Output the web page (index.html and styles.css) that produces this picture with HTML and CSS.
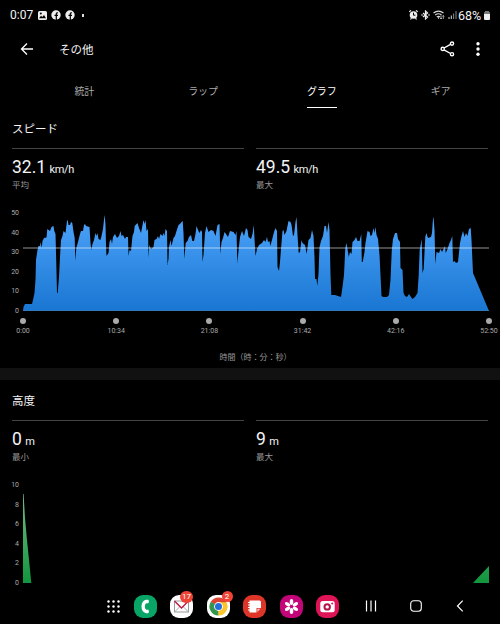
FILE: index.html
```html
<!DOCTYPE html>
<html lang="ja">
<head>
    <meta charset="UTF-8">
    <meta name="viewport" content="width=device-width, initial-scale=1.0">
    <title>その他</title>
    <link rel="stylesheet" href="styles.css">
</head>
<body>
    <div class="screen">
        <!-- Status bar -->
        <div class="status-bar">
            <div class="status-left">
                <span class="clock">0:07</span>
                <svg width="9" height="9" viewBox="0 0 9 9"><rect width="9" height="9" rx="1.5" fill="#eee"/><path d="M1 7.3L3 4.8L4.3 6L6 4L8 7.3Z" fill="#000"/><circle cx="2.8" cy="2.6" r="1" fill="#000"/></svg>
                <svg width="10" height="10" viewBox="0 0 10 10"><circle cx="5" cy="5" r="4.7" fill="#eee"/><path d="M5.3 10V4Q5.3 2.6 7 2.8M3.5 5.3H7" fill="none" stroke="#000" stroke-width="1.2"/></svg>
                <svg width="10" height="10" viewBox="0 0 10 10"><circle cx="5" cy="5" r="4.7" fill="#eee"/><path d="M5.3 10V4Q5.3 2.6 7 2.8M3.5 5.3H7" fill="none" stroke="#000" stroke-width="1.2"/></svg>
                <span class="more-dot"></span>
            </div>
            <div class="status-right">
                <svg width="9" height="10" viewBox="0 0 9 10"><path d="M.3 1.8L2 .4M8.7 1.8L7 .4M1.5 9.5L2.5 8M7.5 9.5L6.5 8" stroke="#eee" stroke-width="1.2"/><circle cx="4.5" cy="5" r="3.8" fill="#eee"/><path d="M4.5 2.7V5.2H6.4" fill="none" stroke="#000"/></svg>
                <svg width="9" height="10" viewBox="0 0 9 10"><path d="M2 3L6.6 7L4.5 9V1L6.6 3L2 7" fill="none" stroke="#eee" stroke-width="1.2"/><circle cx="1" cy="5" r=".8" fill="#eee"/><circle cx="8" cy="5" r=".8" fill="#eee"/></svg>
                <svg width="12" height="10" viewBox="0 0 12 10"><path d="M.5 3Q5.5-.8 10.5 3M2.2 5Q5.5 2.5 8.5 5M3.8 7Q5.5 5.8 7 7" fill="none" stroke="#ddd" stroke-width="1.1"/><path d="M5.5 9V7M8 5.5V9M7 8L8 9L9 8M10.3 9V5.5M9.5 6.5L10.3 5.5L11.2 6.5" fill="none" stroke="#ccc" stroke-width=".8"/></svg>
                <svg width="9" height="10" viewBox="0 0 9 10"><path d="M1 7V9M3.3 5.5V9" stroke="#ddd"/><path d="M5.6 3.5V9M8 1V9" stroke="#888"/></svg>
                <span class="battery-text">68%</span>
                <svg width="6" height="9" viewBox="0 0 6 9"><path d="M0 1.5Q0 1 1 1V0H5V1Q6 1 6 1.5V3H0Z" fill="#777"/><path d="M0 3H6V8Q6 9 5 9H1Q0 9 0 8Z" fill="#eee"/></svg>
            </div>
        </div>

        <!-- App bar -->
        <div class="app-bar">
            <svg class="back" width="14" height="14" viewBox="0 0 14 14"><path d="M13 7H2M7 1.5L1.5 7L7 12.5" fill="none" stroke="#fff" stroke-width="1.3"/></svg>
            <h1>その他</h1>
            <svg class="share" width="15" height="16" viewBox="0 0 15 16"><g fill="none" stroke="#fff" stroke-width="1.4"><path d="M4 7L10.5 3.3M4 8.8L10.5 12.5"/><circle cx="2.7" cy="7.9" r="1.6"/><circle cx="12" cy="2.6" r="1.6"/><circle cx="12" cy="13.2" r="1.6"/></g></svg>
            <svg width="4" height="16" viewBox="0 0 4 16"><g fill="#fff"><circle cx="2" cy="2.8" r="1.7"/><circle cx="2" cy="8" r="1.7"/><circle cx="2" cy="13.2" r="1.7"/></g></svg>
        </div>

        <div class="tabs">
            <div class="tab">統計</div>
            <div class="tab">ラップ</div>
            <div class="tab active">グラフ</div>
            <div class="tab">ギア</div>
        </div>

        <!-- Speed -->
        <div class="section speed">
            <h2>スピード</h2>
            <div class="stats">
                <div class="stat">
                    <div class="value">32.1 <span class="unit">km/h</span></div>
                    <div class="label">平均</div>
                </div>
                <div class="stat">
                    <div class="value">49.5 <span class="unit">km/h</span></div>
                    <div class="label">最大</div>
                </div>
            </div>
            <div class="chart">
                <div class="y-axis">
                    <span>50</span><span>40</span><span>30</span><span>20</span><span>10</span><span>0</span>
                </div>
                <svg class="plot" width="466" height="100" viewBox="23 211 466 100">
                    <defs>
                        <linearGradient id="blue" x1="0" y1="0" x2="0" y2="1">
                            <stop offset="0" stop-color="#4da3fa"/>
                            <stop offset="1" stop-color="#1976d2"/>
                        </linearGradient>
                    </defs>
                    <path fill="url(#blue)" d="M23 311L23.5 307L25 304H32L33 300L34.5 293L35.5 280L36 260L37.5 250L38.5 246H40L40.7 242L41.7 248L42.5 241L44 238L46.5 237.5L47.3 229L50 231L51.5 227L53.5 226L54.3 231L55.5 234L56.2 260L57 293H57.7L59 277L60 257L61 240L62.5 236L63.5 231L65.5 233L67 221L67.7 220L68.5 225L70 225L71 222L72.3 223L73.5 232L74.7 238L75.3 261L76.3 248L78 242L80 234L81 231L83 231L84 225L85 224L86 226L89.5 227L90.5 243L91.3 250L92.5 244L94 240L95.5 233L96.5 236L97.5 233L98.5 239L100.5 240L101.5 236L103 229L104 220L104.7 215L105.5 225L106 245L106.5 256L108.5 253L109.5 242L111 239L112 244L113 237L115 234L117 238L119 236L120.5 231L121.5 236L123 235L125 239L126 237L128 237L128.5 256L129.5 250L131 251L132.5 236L134 232L134.7 226L137.5 223L139 228L141 233L143.5 220L144.5 224L145.5 220L146.5 231L148 229L148.5 258L149.3 245L151 249L153.5 247L154.5 240L156.5 239L158 236L159 239L160.5 234L162.5 236L163.5 233L164.5 236L165.5 229L167 231L167.5 265L168.5 259L169 247L170.5 240L171.5 246L173.5 238L175 236L176.5 231L178.5 225L180 224L181.5 222L182.7 221L183.5 233L184.3 259L185.7 243L187.5 241L189 237L191 235L192.3 241L194 241L195.5 234L196.5 226L198 230L199.5 233L201 230L202 232L202.5 262L203.5 255L205 233L206.5 226L208.5 232L211 230L213.5 231L215.5 236L217.5 225L219.5 224L220.3 254L221.5 242L223 238L224.5 232L226 234L228 237L230 231L233.5 232L235.5 235L236.5 231L237.3 263L238.7 249L240 237L242 231L244 236L246 228L247.5 230L248.5 237L251 239L252.5 234L253.8 225L254.5 239L255.5 256L257 249L259 245L262 243L264 240L265.5 242L267 237L268 242L269.5 241L270.3 246L272 240L274 232L275.5 228L277 231L277.5 267L279 271L280 262L281.5 243L282.5 231L283.5 230L284.5 235L286.5 231L288.5 221L290.5 222L291.5 225L293 236L294 235L295.5 222L296.5 217L297.5 235L298.7 253L300 252L301.5 240L302.5 243L305 245L306.7 254L308.5 240L310.5 238L312 230L313.5 236L314.5 257L315 279L316.5 279L317.3 286L318.5 274L319.5 247L321 241L323 236L324.5 226L326 226L327 233L328.5 222L329.5 230L330.5 275L331.3 295H335L341 297L342.5 287L344 275L345.3 248L346.5 243L348 252L348.8 257L350 252L351.5 254L352.5 242L354.5 240L356 237L357.5 241L359.5 241L361.3 234L361.8 262H362.7L364.5 252L365.5 243L367.5 231L369.5 232L370.5 236L372 235L373.5 228L374.5 233L375.5 227L376.5 235L378 239L379.5 255L381.5 296L383 297H387L389 295L390.5 280L391.8 250L393 239L395 233H397L398 239L400 242L400.5 268L402.5 270L403.5 293L405 296L407 297L409 294L411 297L412.5 299L415 297L417.5 293L418.7 275L419.7 250L421.7 239L422.5 273L423.7 269L425.3 237L426.3 233L428 238L431 237L432 233L433 219L433.5 217L434.5 230L435.3 264L436.5 252L439 253L440.5 249L442 252L443 250L445 246L445.7 253L447.5 249L449.5 243L451 240L452.3 236L453 262L454.5 261L456 263L458 262L460 243L461.5 236L463 231L464.5 237L466 233L467.5 236L469 229L470.7 228L471.5 240L473 273L489 311Z"/>
                    <path d="M23 248H489" stroke="#fff" stroke-opacity=".29" stroke-width="2"/>
                    <path d="M23 310.5H489" stroke="#3d79b4" stroke-opacity=".7"/>
                </svg>
            </div>
            <div class="x-axis">
                <span>0:00</span><span>10:34</span><span>21:08</span><span>31:42</span><span>42:16</span><span>52:50</span>
            </div>
            <div class="x-title">時間（時：分：秒）</div>
        </div>

        <!-- Elevation -->
        <div class="section elevation">
            <h2>高度</h2>
            <div class="stats">
                <div class="stat">
                    <div class="value">0 <span class="unit">m</span></div>
                    <div class="label">最小</div>
                </div>
                <div class="stat">
                    <div class="value">9 <span class="unit">m</span></div>
                    <div class="label">最大</div>
                </div>
            </div>
            <div class="chart">
                <div class="y-axis">
                    <span>10</span><span>8</span><span>6</span><span>4</span><span>2</span><span>0</span>
                </div>
                <svg class="plot" width="466" height="100" viewBox="23 483 466 100">
                    <defs>
                        <linearGradient id="green" gradientUnits="userSpaceOnUse" x1="0" y1="494" x2="0" y2="583">
                            <stop offset="0" stop-color="#78b886"/>
                            <stop offset=".5" stop-color="#41a95f"/>
                            <stop offset="1" stop-color="#11963d"/>
                        </linearGradient>
                    </defs>
                    <path d="M23 583V494H23.6L25 518L27 540L29 560L31.3 583ZM473 583L489 566V583Z" fill="url(#green)"/>
                </svg>
            </div>
        </div>

        <!-- Taskbar -->
        <div class="taskbar">
            <svg class="apps" width="13" height="13" viewBox="0 0 13 13"><g fill="#fff"><circle cx="1.5" cy="1.5" r="1.2"/><circle cx="6.5" cy="1.5" r="1.2"/><circle cx="11.5" cy="1.5" r="1.2"/><circle cx="1.5" cy="6.5" r="1.2"/><circle cx="6.5" cy="6.5" r="1.2"/><circle cx="11.5" cy="6.5" r="1.2"/><circle cx="1.5" cy="11.5" r="1.2"/><circle cx="6.5" cy="11.5" r="1.2"/><circle cx="11.5" cy="11.5" r="1.2"/></g></svg>
            <div class="dock">
                <div class="app phone">
                    <svg width="23" height="23" viewBox="0 0 23 23"><path d="M12 4.8H13.8Q14.8 4.8 14.8 5.8V7.3Q14.8 8.3 13.8 8.3H12.3Q10.8 9.3 10.8 11.5T12.3 14.7H13.8Q14.8 14.7 14.8 15.7V17.2Q14.8 18.2 13.8 18.2H12Q7.5 17 7.5 11.5T12 4.8Z" fill="#fff"/></svg>
                </div>
                <div class="app mail">
                    <svg width="23" height="23" viewBox="0 0 23 23"><rect x="4.5" y="6" width="14" height="11" fill="#fff" stroke="#999"/><path d="M4.5 17L10 11.5M18.5 17L13 11.5" stroke="#aaa"/><path d="M4.5 6L11.5 13L18.5 6" fill="none" stroke="#bd1942" stroke-width="1.4"/></svg>
                    <span class="badge">17</span>
                </div>
                <div class="app chrome">
                    <svg width="23" height="23" viewBox="0 0 23 23"><path d="M11.5 11.5L3.7 7A9 9 0 0 1 19.3 7Z" fill="#df4333"/><path d="M11.5 11.5L19.3 7A9 9 0 0 1 11.5 20.5Z" fill="#fbc52c"/><path d="M11.5 11.5L11.5 20.5A9 9 0 0 1 3.7 7Z" fill="#34964d"/><path d="M11.5 7H19.3L15.4 13.7L11.5 20.5L11.5 12Z" fill="#fbc52c"/><path d="M3.7 7L7.6 13.7L11.5 11Z" fill="#34964d"/><path d="M11.5 7.2H19.3L17 4.5H11Z" fill="#df4333"/><circle cx="11.5" cy="11.5" r="4.4" fill="#fff"/><circle cx="11.5" cy="11.5" r="3.5" fill="#246fdc"/></svg>
                    <span class="badge small">2</span>
                </div>
                <div class="app notes">
                    <svg width="23" height="23" viewBox="0 0 23 23"><path d="M6.5 5.5H16.5Q18 5.5 18 7V13H13.5V17.5H6.5Z" fill="#fff"/><path d="M14.3 17V13.8H17.5Z" fill="#f7c9c4"/><path d="M5 7.5H7.5M5 10H7.5M5 12.5H7.5M5 15H7.5" stroke="#fff"/></svg>
                </div>
                <div class="app gallery">
                    <svg width="23" height="23" viewBox="0 0 23 23"><g fill="#fff"><ellipse cx="11.5" cy="7" rx="1.8" ry="3"/><ellipse cx="11.5" cy="16" rx="1.8" ry="3"/><ellipse cx="11.5" cy="7" rx="1.8" ry="3" transform="rotate(60 11.5 11.5)"/><ellipse cx="11.5" cy="16" rx="1.8" ry="3" transform="rotate(60 11.5 11.5)"/><ellipse cx="11.5" cy="7" rx="1.8" ry="3" transform="rotate(120 11.5 11.5)"/><ellipse cx="11.5" cy="16" rx="1.8" ry="3" transform="rotate(120 11.5 11.5)"/></g><circle cx="11.5" cy="11.5" r="1.2" fill="#c4057a"/></svg>
                </div>
                <div class="app camera">
                    <svg width="23" height="23" viewBox="0 0 23 23"><rect x="4.3" y="6" width="14.4" height="11.3" rx="2.5" fill="#fff"/><circle cx="11.2" cy="11.9" r="2.7" fill="none" stroke="#b5144c" stroke-width="2"/><circle cx="16.2" cy="8.5" r="1" fill="#df1456"/></svg>
                </div>
            </div>
            <div class="nav-keys">
                <svg width="12" height="12" viewBox="0 0 12 12"><path d="M1.5 .5V11.5M6 .5V11.5M10.5 .5V11.5" stroke="#fff" stroke-width="1.2"/></svg>
                <svg width="12" height="12" viewBox="0 0 12 12"><rect x=".7" y=".7" width="10.6" height="10.6" rx="3" fill="none" stroke="#fff" stroke-width="1.1"/></svg>
                <svg width="12" height="12" viewBox="0 0 12 12"><path d="M8.7 .7L3.5 6L8.7 11.3" fill="none" stroke="#fff" stroke-width="1.2"/></svg>
            </div>
        </div>
    </div>
</body>
</html>
```
FILE: styles.css
```css
* {
    box-sizing: border-box;
}

body {
    margin: 0;
    background: #000;
    color: #f4f4f4;
    font-family: Roboto, "Noto Sans CJK JP", sans-serif;
    overflow: hidden;
}

svg {
    display: block;
    flex: none;
}

.screen {
    display: flex;
    flex-direction: column;
    width: 500px;
    height: 624px;
    overflow: hidden;
}

/* Status bar */
.status-bar {
    display: flex;
    justify-content: space-between;
    height: 30px;
    padding: 0 10px;
    flex: none;
}

.status-left, .status-right {
    display: flex;
    align-items: center;
}

.status-left {
    gap: 4px;
}

.clock {
    width: 24px;
    font-size: 12px;
    white-space: nowrap;
}

.more-dot {
    width: 2px;
    height: 3px;
    margin-left: 3px;
    background: #ddd;
}

.status-right {
    gap: 3px;
}

.battery-text {
    width: 24px;
    font-size: 12.5px;
    margin: 0 -1px 0 -2px;
    white-space: nowrap;
}

/* App bar */
.app-bar {
    display: flex;
    align-items: center;
    height: 37px;
    padding: 0 20px;
    flex: none;
}

.app-bar h1 {
    margin: 0 0 0 25px;
    font-size: 11.5px;
    font-weight: 400;
}

.share {
    margin-left: auto;
    margin-right: 21px;
}

.tabs {
    display: grid;
    grid-template-columns: repeat(4, 1fr);
    height: 41px;
    padding-left: 25px;
    flex: none;
}

.tab {
    justify-self: center;
    height: 41px;
    line-height: 49px;
    font-size: 10px;
    color: #aaa;
}

.tab.active {
    color: #fff;
    border-bottom: 1px solid #fff;
}

/* Sections */
.section {
    flex: none;
}

.speed {
    height: 272px;
    border-bottom: 12px solid #111;
}

.elevation {
    height: 208px;
}

.section h2 {
    height: 40px;
    margin: 0;
    padding-left: 12px;
    line-height: 43px;
    font-size: 11.5px;
    font-weight: 400;
}

.stats {
    display: grid;
    grid-template-columns: 1fr 1fr;
    gap: 12px;
    height: 55px;
    padding: 0 12px;
}

.stat {
    border-top: 1px solid #444;
}

.value {
    height: 29px;
    line-height: 37px;
    font-size: 17.5px;
    white-space: nowrap;
    word-spacing: -1px;
}

.unit {
    font-size: 11px;
    letter-spacing: -0.3px;
}

.label {
    line-height: 14px;
    font-size: 8.5px;
    color: #999;
}

/* Charts */
.chart {
    display: flex;
    height: 108px;
    padding-top: 8px;
}

.y-axis {
    display: flex;
    flex-direction: column;
    justify-content: space-between;
    width: 19px;
    height: 108px;
    margin: -3px 4px 0 0;
    text-align: right;
    font-size: 7px;
    line-height: 10px;
    color: #aaa;
}

.x-axis {
    display: flex;
    justify-content: space-between;
    width: 496px;
    margin-left: 8px;
    padding-top: 7px;
}

.x-axis span {
    display: flex;
    flex-direction: column;
    align-items: center;
    width: 30px;
    font-size: 7px;
    line-height: 8px;
    color: #aaa;
}

.x-axis span::before {
    content: "";
    width: 6px;
    height: 6px;
    margin-bottom: 3px;
    border-radius: 50%;
    background: #aaa;
}

.x-title {
    margin-left: 11px;
    padding-top: 17px;
    text-align: center;
    font-size: 8px;
    line-height: 12px;
    color: #999;
}

/* Taskbar */
.taskbar {
    display: flex;
    align-items: center;
    flex: 1;
    padding: 0 34px 0 107px;
}

.dock {
    display: flex;
    gap: 13.5px;
    margin-left: 13.5px;
}

.app {
    position: relative;
    width: 23px;
    height: 23px;
    border-radius: 9px;
}

.phone {
    background: #08a567;
}

.mail, .chrome {
    background: #fff;
}

.notes {
    background: #df3529;
}

.gallery {
    background: #c4057a;
}

.camera {
    background: #df1456;
}

.badge {
    position: absolute;
    top: -4px;
    left: 10px;
    width: 13px;
    height: 12px;
    border-radius: 6px;
    background: #ed4435;
    color: #fff;
    text-align: center;
    font-size: 8px;
    line-height: 12px;
}

.badge.small {
    left: 15px;
    width: 11px;
    height: 11px;
    line-height: 11px;
}

.nav-keys {
    display: flex;
    justify-content: space-between;
    width: 101px;
    margin-left: auto;
}
```
